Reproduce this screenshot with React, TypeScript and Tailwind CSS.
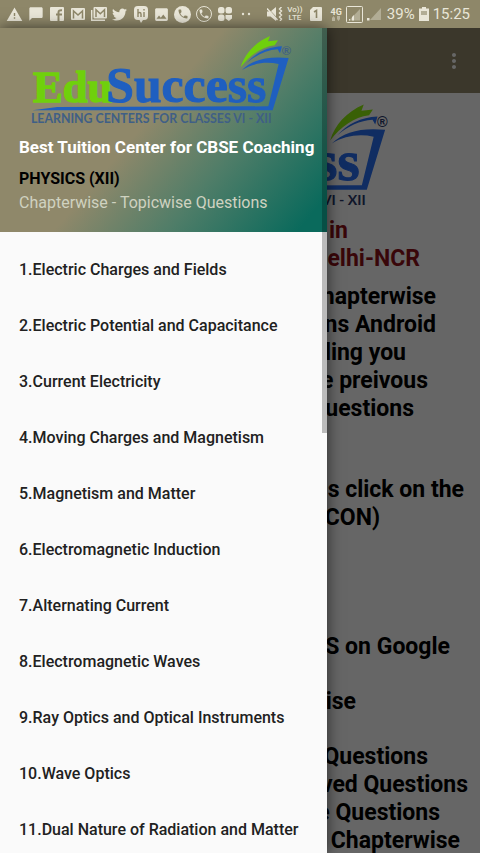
import type { ReactNode } from 'react'
import { FaTwitter } from 'react-icons/fa'
import { MdChatBubble, MdImage, MdMoreVert, MdPhone, MdWarning } from 'react-icons/md'

const chapters = [
  'Electric Charges and Fields',
  'Electric Potential and Capacitance',
  'Current Electricity',
  'Moving Charges and Magnetism',
  'Magnetism and Matter',
  'Electromagnetic Induction',
  'Alternating Current',
  'Electromagnetic Waves',
  'Ray Optics and Optical Instruments',
  'Wave Optics',
  'Dual Nature of Radiation and Matter',
]

type LogoProps = {
  className: string
  first?: string
  second: string
  tagline: string
  green: string
  blue: string
  ink: string
}

function Logo({ className, first, second, tagline, green, blue, ink }: LogoProps) {
  return (
    <svg viewBox="84 12 804 288" className={className} role="img" aria-label="EduSuccess">
      {first && (
        <text x="99" y="222" fontFamily="Liberation Serif, serif" fontWeight="700" fontSize="134" fill={green} stroke={green} strokeWidth="4">
          {first}
        </text>
      )}
      <text x="799" y="222" textAnchor="end" fontFamily="Liberation Serif, serif" fontWeight="700" fontSize="149" fill={blue} stroke={blue} strokeWidth="3">
        {second}
      </text>
      <path fill={green} d="M722 118C734 78 764 44 810 24L804 40L834 37L824 52C784 57 750 82 722 118Z" />
      <path fill={blue} d="M740 105C768 74 802 57 846 55L840 76L833 64C800 66 770 80 740 105Z" />
      <path fill={blue} d="M726 126C758 94 806 84 866 90L818 247L97 247L172 237L805 235L836 108C796 100 760 106 726 126Z" />
      <text x="845" y="82" fontFamily="Liberation Sans, sans-serif" fontWeight="700" fontSize="38" fill={ink}>
        ®
      </text>
      <text x="815" y="286" textAnchor="end" fontFamily="Lato, sans-serif" fontWeight="700" fontSize="37" fill={ink}>
        {tagline}
      </text>
    </svg>
  )
}

function Slot({ children }: { children?: ReactNode }) {
  return <span className="flex w-[21px] shrink-0 items-center justify-center">{children}</span>
}

function FacebookIcon() {
  return (
    <svg viewBox="0 0 14 14" className="size-3.5">
      <rect width="14" height="14" rx="1" fill="currentColor" />
      <path d="M8.5 14V5.2C8.5 3.6 9.4 3 12 3.2M6 7.5h6" stroke="#8e8769" strokeWidth="2" fill="none" />
    </svg>
  )
}

function MailIcon() {
  return (
    <svg viewBox="0 0 14 12" className="h-3 w-3.5">
      <rect width="14" height="12" rx="1" fill="currentColor" />
      <path d="M2.5 10.5V3L7 7l4.5-4v7.5" stroke="#8e8769" strokeWidth="1.5" fill="none" />
    </svg>
  )
}

function MailStackIcon() {
  return (
    <svg viewBox="0 0 16 14" className="h-3.5 w-4">
      <path d="M.7 3v10.3H14" stroke="currentColor" strokeWidth="1.4" fill="none" />
      <rect x="2.5" width="13.5" height="11.5" rx="1" fill="currentColor" />
      <path d="M5 10V2.7l4.3 4 4.2-4V10" stroke="#8e8769" strokeWidth="1.5" fill="none" />
    </svg>
  )
}

function HikeIcon() {
  return (
    <svg viewBox="0 0 14 17" className="h-[17px] w-3.5">
      <path d="M4 0h6c3 0 4 1.5 4 4v6c0 2.5-1 4-4 4H9l-2 3-1.5-3H4c-3 0-4-1.5-4-4V4c0-2.5 1-4 4-4Z" fill="currentColor" />
      <path d="M4 3v8M4 8c0-2 3-2 3 0v3M10 6v5M10 3v1.5" stroke="#8e8769" strokeWidth="1.4" fill="none" />
    </svg>
  )
}

function CloverIcon() {
  return (
    <svg viewBox="0 0 14 14" className="size-3.5" fill="currentColor">
      <rect width="6.5" height="6.5" rx="2.5" />
      <rect x="7.5" width="6.5" height="6.5" rx="2.5" />
      <rect y="7.5" width="6.5" height="6.5" rx="2.5" />
      <path d="M7.5 8h6.5v3.5L10.8 14 7.5 11.5Z" />
    </svg>
  )
}

function MuteIcon() {
  return (
    <svg viewBox="0 0 16 14" className="h-3.5 w-4">
      <path d="M0 4.5h3.5L9 0v14L3.5 9.5H0Z" fill="currentColor" />
      <path d="M1 1.5 11 12" stroke="#8e8769" strokeWidth="1" />
      <path d="M0 1.5 10.5 13" stroke="currentColor" strokeWidth="1.4" />
      <path d="M14.5 0 12.5 2l2 2-2 2 2 2-2 2 2 2-1.5 2" stroke="currentColor" strokeWidth="1.4" fill="none" />
    </svg>
  )
}

function StatusBar() {
  return (
    <div className="flex h-7 shrink-0 items-center bg-[#8e8769] pr-2.5 pl-1 text-[#e9e6d8]">
      <Slot><MdWarning className="size-[17px]" /></Slot>
      <Slot><MdChatBubble className="size-4" /></Slot>
      <Slot><FacebookIcon /></Slot>
      <Slot><MailIcon /></Slot>
      <Slot><MailStackIcon /></Slot>
      <Slot><FaTwitter className="size-[15px]" /></Slot>
      <Slot><HikeIcon /></Slot>
      <Slot><MdImage className="size-[17px]" /></Slot>
      <Slot>
        <span className="flex size-[17px] items-center justify-center rounded-full bg-[#e9e6d8] text-[#8e8769]">
          <MdPhone className="size-3" />
        </span>
      </Slot>
      <Slot>
        <span className="flex size-4 items-center justify-center rounded-full border border-[#e9e6d8]">
          <MdPhone className="size-3" />
        </span>
      </Slot>
      <Slot><CloverIcon /></Slot>
      <Slot>
        <svg viewBox="0 0 10 4" className="h-1 w-2.5" fill="currentColor">
          <circle cx="2" cy="2" r="1.2" />
          <circle cx="8" cy="2" r="1.2" />
        </svg>
      </Slot>
      <div className="ml-auto flex items-center gap-1">
        <MuteIcon />
        <span className="text-center text-[8px] leading-2 font-medium">
          Vo))
          <br />
          LTE
        </span>
        <svg viewBox="0 0 12 14" className="mx-1 h-3.5 w-3">
          <path d="M3 0h8q1 0 1 1v12q0 1-1 1H1q-1 0-1-1V3Z" fill="currentColor" />
          <path d="M4 5l2.5-1.5V11" stroke="#8e8769" strokeWidth="1.6" fill="none" />
        </svg>
        <span className="flex flex-col items-center text-[9px] leading-2 font-bold">
          4G
          <svg viewBox="0 0 8 5" className="h-[5px] w-2 opacity-50" fill="currentColor">
            <path d="M0 2 1.5 0 3 2v3H0ZM5 0h3v3L6.5 5 5 3Z" />
          </svg>
        </span>
        <svg viewBox="0 0 17 17" className="size-[17px]">
          <rect x=".5" y=".5" width="16" height="16" rx="1" stroke="currentColor" fill="none" />
          <path d="M3 14.5 14 3v11.5Z" fill="currentColor" opacity=".4" />
          <path d="M3 14.5V13h1v1.5ZM6 14.5V11l2-2v5.5Z" fill="currentColor" />
        </svg>
        <svg viewBox="0 0 14 14" className="size-3.5">
          <path d="M3 13 14 1v12Z" fill="currentColor" opacity=".4" />
          <rect y="11" width="2.5" height="2.5" fill="currentColor" />
        </svg>
        <span className="ml-0.5 text-[15px] leading-5">39%</span>
        <svg viewBox="0 0 10 14" className="h-3.5 w-2.5">
          <path d="M3 0h4v1.5h3V14H0V1.5h3Z" fill="currentColor" />
          <path d="M2 4h6v4H2Z" fill="#8e8769" opacity=".6" />
        </svg>
        <span className="text-[15px] leading-5">15:25</span>
      </div>
    </div>
  )
}

function HomePage() {
  return (
    <div className="flex h-full flex-col bg-white text-right text-[23px] leading-7 font-bold whitespace-nowrap text-black">
      <header className="flex h-[65px] shrink-0 items-center justify-end bg-[#938a6c] pr-3.5 text-white">
        <button type="button" aria-label="More options">
          <MdMoreVert className="size-6" />
        </button>
      </header>
      <main className="flex flex-col overflow-hidden pt-[7px]">
        <Logo
          className="h-[110px] w-[308px] shrink-0 self-center"
          second="ss"
          tagline="VI - XII"
          green="#90f010"
          blue="#2a70f4"
          ink="#28386a"
        />
        <h1 className="mt-[7px] text-[#901018]">
          <span className="block pr-33">in</span>
          <span className="block pr-15">elhi-NCR</span>
        </h1>
        <p className="mt-2.5">
          <span className="block pr-11">hapterwise</span>
          <span className="block pr-11">ns Android</span>
          <span className="block pr-[74px]">ding you</span>
          <span className="block pr-13">e preivous</span>
          <span className="block pr-[66px]">uestions</span>
        </p>
        <p className="mt-[53px]">
          <span className="block pr-4">s click on the</span>
          <span className="block pr-25">CON)</span>
        </p>
        <p className="mt-[101px]">
          <span className="block pr-[30px]">S on Google</span>
        </p>
        <p className="mt-[27px]">
          <span className="block pr-31">ise</span>
        </p>
        <p className="mt-[27px]">
          <span className="block pr-13">Questions</span>
          <span className="block pr-3">ved Questions</span>
          <span className="block pr-10">e Questions</span>
          <span className="block pr-5">Chapterwise</span>
        </p>
      </main>
    </div>
  )
}

function Drawer() {
  return (
    <aside className="absolute inset-y-0 left-0 w-[327px] overflow-hidden bg-[#fafafa] shadow-[0_0_14px_rgba(0,0,0,0.6)]">
      <div className="bg-[linear-gradient(130deg,#8f886a_45%,#4f7d68_68%,#0a6a5c_94%)] pt-1 pb-[17px] pl-[19px]">
        <Logo
          className="ml-[9px] h-24 w-[268px]"
          first="Edu"
          second="Success"
          tagline="LEARNING CENTERS FOR CLASSES VI - XII"
          green="#6fd00c"
          blue="#1f5fc0"
          ink="#3f5f86"
        />
        <p className="mt-[7px] text-[17px] leading-6 font-bold whitespace-nowrap text-white">Best Tuition Center for CBSE Coaching</p>
        <h2 className="mt-2 text-base leading-6 font-bold text-black">PHYSICS (XII)</h2>
        <p className="text-base leading-6 text-[#cfd2c0]">Chapterwise - Topicwise Questions</p>
      </div>
      <nav className="pt-2.5">
        <ul>
          {chapters.map((chapter, i) => (
            <li key={chapter}>
              <a href={`#chapter-${i + 1}`} className="flex h-14 items-center pl-[19px] text-base font-medium text-[#212121]">
                {i + 1}.{chapter}
              </a>
            </li>
          ))}
        </ul>
      </nav>
      <div className="absolute top-0 right-0 h-[405px] w-[5px] bg-black/25" />
    </aside>
  )
}

export default function App() {
  return (
    <div className="flex h-screen flex-col overflow-hidden font-[Roboto,sans-serif]">
      <StatusBar />
      <div className="relative min-h-0 flex-1">
        <HomePage />
        <div className="absolute inset-0 bg-black/60" />
        <Drawer />
      </div>
    </div>
  )
}
